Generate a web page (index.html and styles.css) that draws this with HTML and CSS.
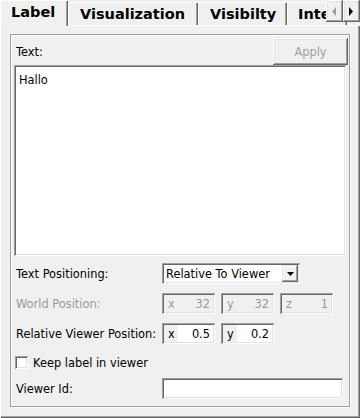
FILE: index.html
```html
<!DOCTYPE html>
<html>
<head>
<meta charset="utf-8">
<link rel="stylesheet" href="styles.css">
</head>
<body>
<div class="tabwidget">
  <div class="tabbar">
    <div class="tab active w-label"><span>Label</span></div>
    <div class="tab w-vis"><span>Visualization</span></div>
    <div class="tab w-visb"><span>Visibilty</span></div>
    <div class="tab w-inte"><span>Inte</span></div>
    <div class="tab-fill"></div>
    <div class="scrollers">
      <div class="sbtn"><svg width="5" height="9" viewBox="0 0 5 9"><path d="M4 0 L0 4.5 L4 9 Z" fill="#a0a0a0"/></svg></div>
      <div class="sbtn"><svg width="5" height="9" viewBox="0 0 5 9"><path d="M0 0 L4 4.5 L0 9 Z" fill="#000"/></svg></div>
    </div>
  </div>
  <div class="panel">
    <div class="group">
      <div class="row-head">
        <span class="lbl">Text:</span>
        <div class="button disabled">Apply</div>
      </div>
      <div class="textarea">Hallo</div>
      <div class="row r-pos">
        <span class="lbl">Text Positioning:</span>
        <div class="combo">
          <span class="combo-text">Relative To Viewer</span>
          <div class="combo-btn"><svg width="7" height="4" viewBox="0 0 7 4"><path d="M0 0 H7 L3.5 4 Z" fill="#000"/></svg></div>
        </div>
      </div>
      <div class="row r-world">
        <span class="lbl dim">World Position:</span>
        <div class="spins">
          <div class="spin disabled"><span class="pre">x</span><span class="val">32</span></div>
          <div class="spin disabled"><span class="pre">y</span><span class="val">32</span></div>
          <div class="spin disabled"><span class="pre">z</span><span class="val">1</span></div>
        </div>
      </div>
      <div class="row r-rel">
        <span class="lbl">Relative Viewer Position:</span>
        <div class="spins">
          <div class="spin"><span class="pre">x</span><span class="val">0.5</span></div>
          <div class="spin"><span class="pre">y</span><span class="val">0.2</span></div>
        </div>
      </div>
      <div class="row r-check">
        <div class="checkbox"></div>
        <span class="check-lbl">Keep label in viewer</span>
      </div>
      <div class="row r-id">
        <span class="lbl">Viewer Id:</span>
        <div class="lineedit"></div>
      </div>
    </div>
  </div>
</div>
</body>
</html>
```

FILE: styles.css
```css
html, body {
  margin: 0;
  padding: 0;
  background: #f0f0f0;
}
body {
  font-family: "DejaVu Sans", Verdana, sans-serif;
  font-size: 11.4px;
  color: #000;
}
.tabwidget {
  width: 360px;
  height: 418px;
  display: flex;
  flex-direction: column;
  overflow: hidden;
}
.tabbar {
  position: relative;
  display: flex;
  height: 26px;
  flex: none;
}
.tab {
  flex: none;
  box-sizing: border-box;
  height: 24px;
  margin-top: 2px;
  border-bottom: 1px solid #fff;
  box-shadow: inset 1px 0 #fff, inset 0 1px #fff, inset -1px 0 #696969, inset -2px 0 #a0a0a0;
  font-family: "DejaVu Sans", Verdana, sans-serif;
  font-weight: bold;
  font-size: 14.5px;
  padding-left: 12px;
  padding-top: 4px;
  white-space: nowrap;
  overflow: hidden;
}
.tab.active {
  height: 26px;
  margin-top: 0;
  border-bottom: none;
  padding-top: 4px;
  padding-left: 11px;
}
.w-label { width: 68px; }
.w-vis { width: 130px; }
.w-visb { width: 89px; }
.w-inte { width: 60px; padding-left: 11px; }
.tab-fill {
  flex: 1;
  border-bottom: 1px solid #fff;
  align-self: flex-end;
}
.scrollers {
  position: absolute;
  top: 0;
  right: 0;
  display: flex;
  background: #f0f0f0;
}
.sbtn {
  width: 17px;
  height: 22px;
  box-sizing: border-box;
  display: flex;
  align-items: center;
  justify-content: center;
  box-shadow: inset -1px -1px #696969, inset 1px 1px #fff, inset -2px -2px #a0a0a0, inset 2px 2px #e3e3e3;
}
.panel {
  flex: 1;
  box-sizing: border-box;
  border-left: 1px solid #fff;
  box-shadow: inset -1px -1px #696969, inset -2px -2px #a0a0a0;
  padding: 8px 10px 11px 9px;
  display: flex;
}
.group {
  flex: 1;
  box-sizing: border-box;
  border: 1px solid #a0a0a0;
  box-shadow: inset 1px 1px #fff, 1px 1px #fff;
  padding: 0 1px 0 3px;
  display: flex;
  flex-direction: column;
}
.row-head {
  height: 30px;
  display: flex;
  align-items: flex-end;
  justify-content: space-between;
}
.row-head .lbl {
  align-self: center;
  padding-top: 3px;
}
.lbl {
  padding-left: 2px;
  width: 146px;
  flex: none;
  white-space: nowrap;
}
.dim { color: #9a9a9a; }
.button {
  width: 75px;
  height: 27px;
  box-sizing: border-box;
  display: flex;
  align-items: center;
  justify-content: center;
  box-shadow: inset -1px -1px #696969, inset 1px 1px #fff, inset -2px -2px #a0a0a0, inset 2px 2px #e3e3e3;
}
.button.disabled { color: #a0a0a0; }
.textarea {
  height: 191px;
  width: 332px;
  box-sizing: border-box;
  background: #fff;
  box-shadow: inset 1px 1px #a0a0a0, inset -1px -1px #fff, inset 2px 2px #696969, inset -2px -2px #e3e3e3;
  padding: 8px 5px;
}
.row {
  display: flex;
  align-items: center;
  height: 21px;
}
.r-pos { margin-top: 7px; }
.r-world { margin-top: 9px; }
.r-rel { margin-top: 9px; }
.r-check { margin-top: 8px; }
.r-id { margin-top: 5px; }
.combo {
  width: 138px;
  height: 21px;
  box-sizing: border-box;
  background: #fff;
  box-shadow: inset 1px 1px #a0a0a0, inset -1px -1px #fff, inset 2px 2px #696969, inset -2px -2px #e3e3e3;
  display: flex;
  align-items: center;
  padding: 2px;
}
.combo-text {
  flex: 1;
  padding-left: 2px;
  white-space: nowrap;
}
.combo-btn {
  width: 16px;
  height: 17px;
  box-sizing: border-box;
  background: #f0f0f0;
  display: flex;
  align-items: center;
  justify-content: center;
  box-shadow: inset -1px -1px #696969, inset 1px 1px #e3e3e3, inset -2px -2px #a0a0a0, inset 2px 2px #fff;
}
.spins {
  display: flex;
  gap: 6px;
}
.spin {
  width: 53px;
  height: 21px;
  box-sizing: border-box;
  display: flex;
  align-items: center;
  padding: 2px;
  background: #fff;
  box-shadow: inset 1px 1px #a0a0a0, inset -1px -1px #fff, inset 2px 2px #696969, inset -2px -2px #e3e3e3;
}
.spin .pre {
  background: #f0f0f0;
  align-self: stretch;
  display: flex;
  align-items: center;
  padding: 0 3px 0 4px;
}
.spin .val {
  flex: 1;
  text-align: right;
  padding-right: 3px;
}
.spin.disabled {
  background: #f0f0f0;
  color: #9a9a9a;
}
.checkbox {
  width: 13px;
  height: 13px;
  box-sizing: border-box;
  margin-left: 1px;
  background: #fff;
  box-shadow: inset 1px 1px #a0a0a0, inset -1px -1px #fff, inset 2px 2px #696969, inset -2px -2px #e3e3e3;
}
.check-lbl {
  margin-left: 5px;
}
.lineedit {
  width: 181px;
  height: 21px;
  box-sizing: border-box;
  background: #fff;
  box-shadow: inset 1px 1px #a0a0a0, inset -1px -1px #fff, inset 2px 2px #696969, inset -2px -2px #e3e3e3;
}
```
